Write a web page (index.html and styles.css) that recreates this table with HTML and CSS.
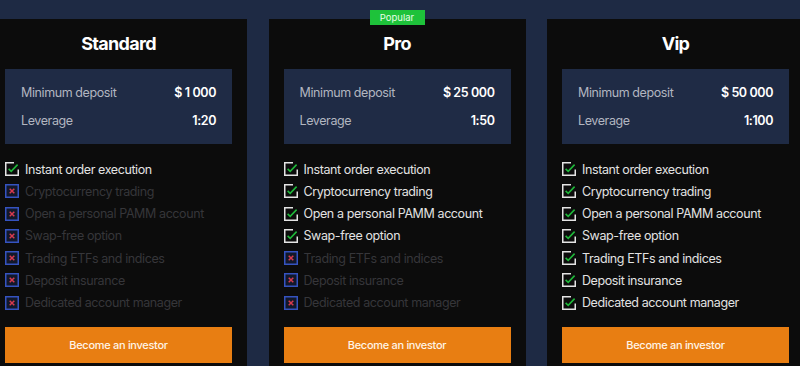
FILE: index.html
```html
<!DOCTYPE html>
<html>
<head>
<meta charset="utf-8">
<link rel="stylesheet" href="styles.css">
</head>
<body>
<div class="plans">
  <div class="card">
    <h2 class="title">Standard</h2>
    <div class="terms">
      <div class="term"><span class="label">Minimum deposit</span><span class="value">$ 1 000</span></div>
      <div class="term"><span class="label">Leverage</span><span class="value">1:20</span></div>
    </div>
    <ul class="features">
      <li class="yes"><svg class="ico" viewBox="0 0 14 14"><path class="box" d="M9 0.75H0.75V13.25H13.25V7.5"/><path class="tick" d="M3.6 6.8L6.2 9.3L12.6 2.6"/></svg>Instant order execution</li>
      <li class="no"><svg class="ico" viewBox="0 0 14 14"><rect class="nbox" x="0.75" y="0.75" width="12.5" height="12.5"/><path class="cross" d="M4.7 4.7L9.3 9.3M9.3 4.7L4.7 9.3"/></svg>Cryptocurrency trading</li>
      <li class="no"><svg class="ico" viewBox="0 0 14 14"><rect class="nbox" x="0.75" y="0.75" width="12.5" height="12.5"/><path class="cross" d="M4.7 4.7L9.3 9.3M9.3 4.7L4.7 9.3"/></svg>Open a personal PAMM account</li>
      <li class="no"><svg class="ico" viewBox="0 0 14 14"><rect class="nbox" x="0.75" y="0.75" width="12.5" height="12.5"/><path class="cross" d="M4.7 4.7L9.3 9.3M9.3 4.7L4.7 9.3"/></svg>Swap-free option</li>
      <li class="no"><svg class="ico" viewBox="0 0 14 14"><rect class="nbox" x="0.75" y="0.75" width="12.5" height="12.5"/><path class="cross" d="M4.7 4.7L9.3 9.3M9.3 4.7L4.7 9.3"/></svg>Trading ETFs and indices</li>
      <li class="no"><svg class="ico" viewBox="0 0 14 14"><rect class="nbox" x="0.75" y="0.75" width="12.5" height="12.5"/><path class="cross" d="M4.7 4.7L9.3 9.3M9.3 4.7L4.7 9.3"/></svg>Deposit insurance</li>
      <li class="no"><svg class="ico" viewBox="0 0 14 14"><rect class="nbox" x="0.75" y="0.75" width="12.5" height="12.5"/><path class="cross" d="M4.7 4.7L9.3 9.3M9.3 4.7L4.7 9.3"/></svg>Dedicated account manager</li>
    </ul>
    <button class="cta">Become an investor</button>
  </div>

  <div class="card">
    <span class="badge">Popular</span>
    <h2 class="title">Pro</h2>
    <div class="terms">
      <div class="term"><span class="label">Minimum deposit</span><span class="value">$ 25 000</span></div>
      <div class="term"><span class="label">Leverage</span><span class="value">1:50</span></div>
    </div>
    <ul class="features">
      <li class="yes"><svg class="ico" viewBox="0 0 14 14"><path class="box" d="M9 0.75H0.75V13.25H13.25V7.5"/><path class="tick" d="M3.6 6.8L6.2 9.3L12.6 2.6"/></svg>Instant order execution</li>
      <li class="yes"><svg class="ico" viewBox="0 0 14 14"><path class="box" d="M9 0.75H0.75V13.25H13.25V7.5"/><path class="tick" d="M3.6 6.8L6.2 9.3L12.6 2.6"/></svg>Cryptocurrency trading</li>
      <li class="yes"><svg class="ico" viewBox="0 0 14 14"><path class="box" d="M9 0.75H0.75V13.25H13.25V7.5"/><path class="tick" d="M3.6 6.8L6.2 9.3L12.6 2.6"/></svg>Open a personal PAMM account</li>
      <li class="yes"><svg class="ico" viewBox="0 0 14 14"><path class="box" d="M9 0.75H0.75V13.25H13.25V7.5"/><path class="tick" d="M3.6 6.8L6.2 9.3L12.6 2.6"/></svg>Swap-free option</li>
      <li class="no"><svg class="ico" viewBox="0 0 14 14"><rect class="nbox" x="0.75" y="0.75" width="12.5" height="12.5"/><path class="cross" d="M4.7 4.7L9.3 9.3M9.3 4.7L4.7 9.3"/></svg>Trading ETFs and indices</li>
      <li class="no"><svg class="ico" viewBox="0 0 14 14"><rect class="nbox" x="0.75" y="0.75" width="12.5" height="12.5"/><path class="cross" d="M4.7 4.7L9.3 9.3M9.3 4.7L4.7 9.3"/></svg>Deposit insurance</li>
      <li class="no"><svg class="ico" viewBox="0 0 14 14"><rect class="nbox" x="0.75" y="0.75" width="12.5" height="12.5"/><path class="cross" d="M4.7 4.7L9.3 9.3M9.3 4.7L4.7 9.3"/></svg>Dedicated account manager</li>
    </ul>
    <button class="cta">Become an investor</button>
  </div>

  <div class="card">
    <h2 class="title">Vip</h2>
    <div class="terms">
      <div class="term"><span class="label">Minimum deposit</span><span class="value">$ 50 000</span></div>
      <div class="term"><span class="label">Leverage</span><span class="value">1:100</span></div>
    </div>
    <ul class="features">
      <li class="yes"><svg class="ico" viewBox="0 0 14 14"><path class="box" d="M9 0.75H0.75V13.25H13.25V7.5"/><path class="tick" d="M3.6 6.8L6.2 9.3L12.6 2.6"/></svg>Instant order execution</li>
      <li class="yes"><svg class="ico" viewBox="0 0 14 14"><path class="box" d="M9 0.75H0.75V13.25H13.25V7.5"/><path class="tick" d="M3.6 6.8L6.2 9.3L12.6 2.6"/></svg>Cryptocurrency trading</li>
      <li class="yes"><svg class="ico" viewBox="0 0 14 14"><path class="box" d="M9 0.75H0.75V13.25H13.25V7.5"/><path class="tick" d="M3.6 6.8L6.2 9.3L12.6 2.6"/></svg>Open a personal PAMM account</li>
      <li class="yes"><svg class="ico" viewBox="0 0 14 14"><path class="box" d="M9 0.75H0.75V13.25H13.25V7.5"/><path class="tick" d="M3.6 6.8L6.2 9.3L12.6 2.6"/></svg>Swap-free option</li>
      <li class="yes"><svg class="ico" viewBox="0 0 14 14"><path class="box" d="M9 0.75H0.75V13.25H13.25V7.5"/><path class="tick" d="M3.6 6.8L6.2 9.3L12.6 2.6"/></svg>Trading ETFs and indices</li>
      <li class="yes"><svg class="ico" viewBox="0 0 14 14"><path class="box" d="M9 0.75H0.75V13.25H13.25V7.5"/><path class="tick" d="M3.6 6.8L6.2 9.3L12.6 2.6"/></svg>Deposit insurance</li>
      <li class="yes"><svg class="ico" viewBox="0 0 14 14"><path class="box" d="M9 0.75H0.75V13.25H13.25V7.5"/><path class="tick" d="M3.6 6.8L6.2 9.3L12.6 2.6"/></svg>Dedicated account manager</li>
    </ul>
    <button class="cta">Become an investor</button>
  </div>
</div>
</body>
</html>
```
FILE: styles.css
```css
html, body {
  margin: 0;
  padding: 0;
  height: 100%;
  overflow: hidden;
}
body {
  background: #1e2a44;
  font-family: Inter, "Noto Sans", sans-serif;
  color: #e6e6e6;
}
.plans {
  display: flex;
  gap: 21.5px;
  margin-left: -10px;
  padding-top: 19px;
}
.card {
  position: relative;
  flex: 0 0 257px;
  box-sizing: border-box;
  background: #0c0c0c;
  padding: 0 15px 20px;
  display: flex;
  flex-direction: column;
}
.badge {
  position: absolute;
  top: -9px;
  left: 101px;
  width: 55px;
  height: 15px;
  background: #1ec23a;
  color: #e8ffe8;
  font-size: 9.5px;
  line-height: 15px;
  text-align: center;
}
.title {
  margin: 0;
  height: 50px;
  line-height: 50px;
  text-align: center;
  font-size: 18px;
  font-weight: 700;
  letter-spacing: -0.7px;
  color: #ffffff;
}
.terms {
  background: #1f2b45;
  padding: 14px 16px 13px;
  display: flex;
  flex-direction: column;
  gap: 8px;
}
.term {
  display: flex;
  justify-content: space-between;
  line-height: 20px;
  font-size: 12.5px;
  letter-spacing: -0.4px;
}
.label {
  color: #b2b6c0;
}
.value {
  color: #ffffff;
  font-weight: 600;
}
.features {
  list-style: none;
  margin: 14px 0 0;
  padding: 0;
}
.features li {
  display: flex;
  align-items: center;
  gap: 6px;
  height: 22.25px;
  font-size: 12.5px;
  letter-spacing: -0.4px;
  white-space: nowrap;
}
.features li.yes {
  color: #e2e2e2;
}
.features li.no {
  color: #36363a;
}
.ico {
  flex: 0 0 14px;
  width: 14px;
  height: 14px;
  fill: none;
}
.box {
  stroke: #e4e4e4;
  stroke-width: 1.5;
}
.tick {
  stroke: #1fb83a;
  stroke-width: 1.6;
}
.nbox {
  stroke: #3553c0;
  stroke-width: 1.5;
  fill: #12182a;
}
.cross {
  stroke: #d83a4e;
  stroke-width: 1.5;
}
.cta {
  flex: 0 0 36px;
  margin-top: 13px;
  height: 36px;
  border: 0;
  background: #e87e12;
  color: #fff4e6;
  font-family: inherit;
  font-size: 11px;
  font-weight: 500;
  letter-spacing: -0.3px;
  cursor: pointer;
}
```
